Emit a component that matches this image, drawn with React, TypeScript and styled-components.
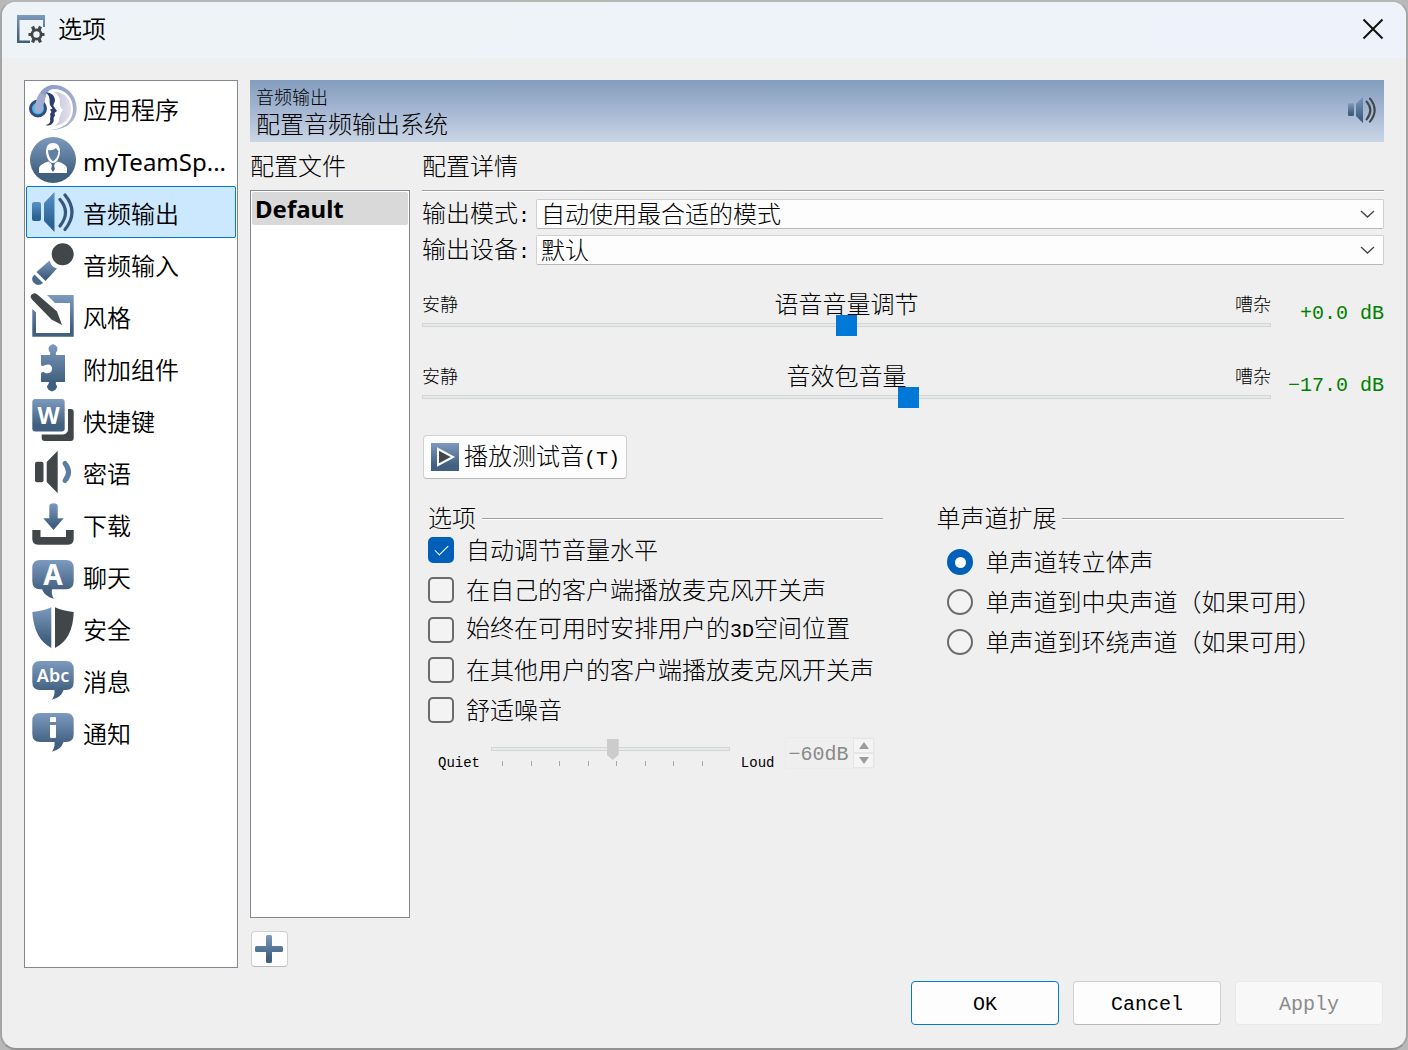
import React, { useState } from "react";
import styled, { createGlobalStyle, css } from "styled-components";

const ui = `"Noto Sans", "Noto Sans CJK SC", sans-serif`;
const song = `"Noto Sans CJK SC", sans-serif`;
const mono = `"Liberation Mono", "Noto Sans CJK SC", monospace`;
const dark = "#414749";
const blue = "url(#blue)";

const GlobalStyle = createGlobalStyle`
  *, *::before, *::after { box-sizing: border-box; }
  body { margin: 0; background: #b9b9b9; }
  button, input, select { font: inherit; color: inherit; margin: 0; }
  ul { list-style: none; margin: 0; padding: 0; }
`;

const Window = styled.div`
  min-height: 100vh;
  display: flex;
  flex-direction: column;
  border: 2px solid #a5a5a5;
  border-top-color: #b6b6b6;
  border-bottom-color: #929292;
  border-radius: 16px;
  background: #efefef;
  overflow: hidden;
  color: #000;
  font-family: ${song};
  font-size: 24px;
  font-weight: 300;
  line-height: 24px;
`;

const TitleBar = styled.header`
  display: flex;
  align-items: center;
  gap: 13px;
  height: 56px;
  padding: 0 22px 2px 15px;
  background: linear-gradient(90deg, #eef3f7, #eef3fb);
`;

const Title = styled.h1`
  flex: 1;
  margin: 0;
  font: 350 24px/24px ${ui};
`;

const CloseButton = styled.button`
  display: flex;
  padding: 0;
  border: 0;
  background: none;
`;

const Body = styled.main`
  flex: 1;
  display: grid;
  grid-template-columns: 214px minmax(0, 1fr);
  gap: 12px;
  padding: 22px 22px 13px;
`;

const Nav = styled.nav`
  padding: 1px;
  border: 1px solid #828790;
  background: #fff;
`;

const NavButton = styled.button<{ $active: boolean }>`
  display: flex;
  align-items: center;
  gap: 6px;
  width: 100%;
  height: 52px;
  padding: 0 2px;
  border: 1px solid ${(p) => (p.$active ? "#0078d4" : "transparent")};
  border-radius: 2px;
  background: ${(p) => (p.$active ? "#cce8ff" : "transparent")};
  font: 400 24px/32px ${ui};
  text-align: left;
  white-space: nowrap;
`;

const NavLabel = styled.span`
  padding-top: 3px;
  &:lang(zh) { font-weight: 350; }
`;

const Content = styled.section`
  display: flex;
  flex-direction: column;
  min-width: 0;
`;

const Banner = styled.div`
  display: flex;
  align-items: center;
  justify-content: space-between;
  height: 62px;
  padding: 0 6px 2px;
  background: linear-gradient(#839dbe, #a9bad5 55%, #cad6e5);
`;

const BannerText = styled.div`
  display: flex;
  flex-direction: column;
  gap: 5px;
`;

const Small = styled.span`
  font-size: 18px;
  line-height: 20px;
`;

const Columns = styled.div`
  flex: 1;
  display: grid;
  grid-template-columns: 160px minmax(0, 1fr);
  gap: 12px;
`;

const Column = styled.div`
  display: flex;
  flex-direction: column;
  min-width: 0;
`;

const Heading = styled.h2`
  margin: 0;
  height: 48px;
  font-size: 24px;
  font-weight: 300;
  line-height: 46px;
`;

const ProfileList = styled.ul`
  && { padding: 1px; }
  flex: 1;
  border: 1px solid #828790;
  background: #fff;
`;

const ProfileButton = styled.button`
  display: block;
  width: 100%;
  padding: 0 3px;
  border: 0;
  border-radius: 2px;
  background: #d9d9d9;
  font: 700 24px/33px ${ui};
  text-align: left;
`;

const raised = css`
  border: 1px solid #d0d0d0;
  border-bottom-color: #b9b9b9;
  border-radius: 4px;
  background: #fdfdfd;
`;

const AddButton = styled.button`
  ${raised}
  display: flex;
  align-items: center;
  width: 37px;
  height: 36px;
  margin: 13px 0 1px 1px;
  padding: 0 3px;
`;

const Rule = styled.hr`
  width: 100%;
  height: 2px;
  margin: 0;
  border: 0;
  border-top: 1px solid #a0a0a0;
  background: #fff;
`;

const Fields = styled.div`
  display: grid;
  grid-template-columns: 108px minmax(0, 1fr);
  align-items: center;
  gap: 6px;
  padding: 7px 0 26px;
`;

const Latin = styled.span`
  font-family: ${mono};
  font-size: 20px;
`;

const SelectBox = styled.div`
  position: relative;
  svg {
    position: absolute;
    right: 9px;
    top: 10px;
    pointer-events: none;
  }
`;

const Select = styled.select`
  ${raised}
  appearance: none;
  display: block;
  width: 100%;
  height: 30px;
  padding: 0 32px 2px 4px;
  border-radius: 2px;
`;

const Volume = styled.div`
  display: grid;
  grid-template-columns: minmax(0, 1fr) 96px;
  align-items: center;
  gap: 17px;
  margin-bottom: 28px;
`;

const VolumeHead = styled.div`
  display: grid;
  grid-template-columns: 1fr auto 1fr;
  align-items: center;
  height: 24px;
  padding-bottom: 2px;
  & > :last-child { text-align: right; }
`;

const Range = styled.input<{ $muted?: boolean }>`
  appearance: none;
  display: block;
  width: 100%;
  height: ${(p) => (p.$muted ? 24 : 20)}px;
  background: none;
  &::-webkit-slider-runnable-track {
    height: 4px;
    border: 1px solid #d4d6d5;
    background: #e7eaea;
  }
  &::-webkit-slider-thumb {
    appearance: none;
    width: ${(p) => (p.$muted ? 12 : 21)}px;
    height: 21px;
    margin-top: -9px;
    border-radius: 0;
    background: ${(p) => (p.$muted ? "#cccccc" : "#0078d7")};
    ${(p) => p.$muted && "clip-path: polygon(0 0, 100% 0, 100% 75%, 50% 100%, 0 75%);"}
  }
`;

const Decibel = styled.output`
  padding-top: 2px;
  color: #008000;
  font: 400 20px/24px ${mono};
  text-align: right;
  white-space: pre;
`;

const TestButton = styled.button`
  ${raised}
  display: flex;
  align-items: center;
  align-self: flex-start;
  gap: 5px;
  height: 44px;
  margin: 0 0 26px 1px;
  padding: 0 6px 0 7px;
`;

const Groups = styled.div`
  display: grid;
  grid-template-columns: minmax(0, 19fr) minmax(0, 17fr);
  align-items: start;
  gap: 53px;
  padding: 0 40px 0 6px;
`;

const Group = styled.fieldset`
  min-width: 0;
  margin: 0;
  padding: 0;
  border: 0;
`;

const Legend = styled.legend`
  display: flex;
  align-items: center;
  gap: 6px;
  width: 100%;
  padding: 0 0 1px;
  white-space: nowrap;
  ${Rule} { margin-top: 4px; }
`;

const Options = styled.div<{ $inset?: boolean }>`
  padding: ${(p) => (p.$inset ? "12px 0 0 11px" : "0")};
`;

const Option = styled.label`
  display: flex;
  align-items: center;
  gap: 12px;
  height: 40px;
  white-space: nowrap;
  & > span { padding-bottom: 2px; }
`;

const Tick = styled.input`
  appearance: none;
  flex: none;
  display: grid;
  place-items: center;
  width: 26px;
  height: 26px;
  border: 2px solid #6b6b6b;
  border-radius: 5px;
  background: #f3f3f3;
  &:checked {
    border-color: #005fb8;
    background: #005fb8;
  }
  &:checked::before {
    content: "";
    width: 13px;
    height: 7px;
    border: solid #fff;
    border-width: 0 0 1px 1px;
    transform: translateY(-2px) rotate(-45deg);
  }
`;

const Radio = styled(Tick)`
  border-radius: 50%;
  &:checked::before {
    width: 11px;
    height: 11px;
    border: 0;
    border-radius: 50%;
    background: #fff;
    transform: none;
  }
`;

const Comfort = styled.div`
  display: flex;
  align-items: flex-end;
  gap: 11px;
  height: 32px;
  margin-top: 7px;
  padding: 0 8px 0 10px;
`;

const Tiny = styled.span`
  font: 400 14px/12px ${mono};
`;

const ComfortTrack = styled.div`
  flex: 1;
  min-width: 0;
  align-self: flex-start;
`;

const Marks = styled.div`
  display: flex;
  justify-content: space-between;
  padding: 0 27px 0 11px;
`;

const Mark = styled.i`
  width: 1px;
  height: 5px;
  background: #a9a9a0;
`;

const Spin = styled.div`
  display: flex;
  align-items: center;
  width: 90px;
  height: 32px;
  padding: 0 0 0 2px;
  border: 1px solid #ebebeb;
  border-radius: 2px;
  color: #8a8a8a;
`;

const SpinInput = styled.input`
  flex: 1;
  min-width: 0;
  padding: 4px 0 0;
  border: 0;
  background: none;
  font: 400 20px/24px ${mono};
`;

const SpinArrows = styled.div`
  display: flex;
  flex-direction: column;
  width: 21px;
`;

const SpinButton = styled.button`
  display: flex;
  align-items: center;
  justify-content: center;
  height: 15px;
  padding: 0;
  border: 1px solid #e6e6e6;
  background: #f4f4f4;
`;

const Footer = styled.footer`
  display: flex;
  justify-content: flex-end;
  gap: 14px;
  padding: 0 23px 23px;
`;

const DialogButton = styled.button<{ $primary?: boolean }>`
  ${raised}
  width: 148px;
  height: 44px;
  padding: 4px 0 0;
  font: 400 20px/24px ${mono};
  ${(p) => p.$primary && "border-color: #0078d4;"}
  &:disabled {
    border-color: #e9e9e9;
    background: #f8f8f8;
    color: #8b8b8b;
  }
`;

const Hidden = styled.svg`
  position: absolute;
  width: 0;
  height: 0;
`;

const Gradients = () => (
  <Hidden aria-hidden="true">
    <defs>
      <linearGradient id="blue" x1="0" y1="0" x2="0" y2="1">
        <stop offset="0" stopColor="#7d9abf" />
        <stop offset="0.8" stopColor="#41607f" />
      </linearGradient>
      <linearGradient id="sound" x1="0" y1="0" x2="0" y2="1">
        <stop offset="0" stopColor="#5993c6" />
        <stop offset="0.8" stopColor="#2a6292" />
      </linearGradient>
      <linearGradient id="face" x1="0" y1="0" x2="1" y2="0">
        <stop offset="0" stopColor="#c3c3da" />
        <stop offset="1" stopColor="#e3e2ee" />
      </linearGradient>
      <linearGradient id="band" x1="0" y1="0" x2="1" y2="1">
        <stop offset="0" stopColor="#8797c3" />
        <stop offset="1" stopColor="#b0bad6" />
      </linearGradient>
    </defs>
  </Hidden>
);

const Glyph = ({ size = 48, box = "0 0 48 48", children }: { size?: number; box?: string; children: React.ReactNode }) => (
  <svg width={size} height={size} viewBox={box} aria-hidden="true">
    {children}
  </svg>
);

const Word = ({ x, y, size, weight = 700, children }: { x: number; y: number; size: number; weight?: number; children: string }) => (
  <text x={x} y={y} fontSize={size} fontFamily="Noto Sans" fontWeight={weight} fill="#fff" textAnchor="middle">
    {children}
  </text>
);

const Speaker = ({ fill = blue, wave = dark }: { fill?: string; wave?: string }) => (
  <>
    <rect x="3" y="14" width="9" height="19" rx="2" fill={fill} />
    <path d="M15 15 25.500 4V44L15 33Z" fill={fill} />
    <path d="M31 11.500Q42 24 31 38M36 7Q50 24 36 41.500" fill="none" stroke={wave} strokeWidth="3.200" strokeLinecap="round" />
  </>
);

const bubble = "M11 5H37Q44.700 5 44.700 13V26Q44.700 34 37 34H34.500Q32 42 22.700 43.700 26 40 25.500 34H11Q3.300 34 3.300 26V13Q3.300 5 11 5Z";

const icons: Record<string, React.ReactNode> = {
  app: (
    <>
      <path d="M24 8C34 7 42 14 42 25 42 34 35 41 25 42 29 40 31 37 30 34 32 32 31 29 34 26 31 23 30 20 31 16 30 12 28 9 24 8Z" fill="url(#face)" />
      <path d="M6 23C8 9 15 1 25 1 38 1 47.700 12 47.700 24.500 47.700 37 37 46.500 21 46 35 45 44 37 44 25 44 13 36 5 25 5 19 5 16 10 15 22Z" fill="url(#band)" />
      <path d="M17 8.500C22 8 26 12 26 16 26 19 24 20 24.500 22L28 27 25.500 29 26 31.500 24.500 34C26 39 21 43 16.500 41 20 40.500 22 38 21 35L21.500 32 21 30 22.500 28 21 25.500 23.500 24.500 21 21C20 17 22 13 17 8.500Z" fill="#2b3d70" />
      <circle cx="9" cy="24.500" r="7.500" fill="#42bce2" stroke="#344a80" strokeWidth="3" />
      <path d="M5.500 24Q7 14 11 9L17 12Q15 17 14 24 13 29 9 29 5 28.500 5.500 24Z" fill="#a3acd0" />
    </>
  ),
  user: (
    <>
      <circle cx="24" cy="24" r="23" fill={blue} />
      <path d="M24 7C28.500 7 31 10 31 16 30.500 22 28 27 24 27S17.500 22 17 16C17 10 19.500 7 24 7Z" fill="#fff" />
      <path d="M19 14Q24 15 27 12 28 14 29.500 15 29 22 24 25.500 19 21 19 14Z" fill="#617fa2" />
      <path d="M10 37V32Q11 28 19.500 25.500L24 29 28.500 25.500Q37 28 38 32V37Z" fill="#fff" />
      <path d="M22 27.500H26L25 29.500 26 33 24 36 22 33 23 29.500Z" fill="#4c6b8d" />
    </>
  ),
  output: <Speaker fill="url(#sound)" wave="#33587b" />,
  input: (
    <>
      <circle cx="33.700" cy="14.300" r="11" fill={dark} />
      <path d="M20.500 20.500Q22 27 28 28.500L16.500 41 7.500 32Z" fill={blue} />
      <path d="M5.500 34.500 14 43Q9 47 5 43 1 39 5.500 34.500Z" fill="#4b698b" />
    </>
  ),
  style: (
    <>
      <path d="M3.300 3H44.700V44.700H3.300ZM7 11V41H41V11Z" fill={blue} fillRule="evenodd" />
      <path d="M0 0H15L33 18 36 36 18 30 3.300 17H0Z" fill="#fff" />
      <path d="M3 7.500Q0 4 3.500 2 6 0 9 3L28 19.500 33 33 22.500 27.500Z" fill={dark} />
    </>
  ),
  addon: (
    <path d="M12 11H21Q22 9 20 7 18 2 24 0 30 2 28 7 26 9 27 11H36V38H27Q26 40 28 42 28 46 23 47.500 18 46 18 42 20 40 20 38H12V29Q14 27 16 29 23 30 23 25 23 19 16 21 14 23 12 21Z" fill={blue} />
  ),
  keys: (
    <>
      <rect x="12.700" y="13" width="32" height="32" rx="3" fill={dark} />
      <rect x="0" y="0" width="39" height="38.500" rx="5" fill="#fff" />
      <rect x="3.300" y="3" width="32.400" height="32.500" rx="3" fill={blue} />
      <Word x={19.5} y={28} size={23}>W</Word>
    </>
  ),
  whisper: (
    <>
      <rect x="6" y="13.700" width="8.500" height="20.600" rx="2" fill={dark} />
      <path d="M17.700 14 28.700 2.700V45.300L17.700 34Z" fill={dark} />
      <path d="M36 15.500Q43 24 36 32.500" fill="none" stroke="#5d7da3" strokeWidth="5" strokeLinecap="round" />
    </>
  ),
  download: (
    <>
      <path d="M20.300 18.300V6Q20.300 3.300 24.500 3.300T28.700 6V18.300H34.700L24.500 30 14.300 18.300Z" fill={blue} />
      <path d="M3.300 30H11.500V37H37V30H44.700V39Q44.700 44.700 39 44.700H9Q3.300 44.700 3.300 39Z" fill={dark} />
    </>
  ),
  chat: (
    <>
      <path d="M11 8H37Q44.700 8 44.700 16V29Q44.700 37.300 37 37.300H23Q22 43 25 46.700 16 45 13 37.300H11Q3.300 37.300 3.300 29V16Q3.300 8 11 8Z" fill={blue} />
      <Word x={24} y={33} size={28}>A</Word>
    </>
  ),
  shield: (
    <>
      <path d="M3.300 8Q14 7 22.300 3.300V44Q5 35 3.300 8Z" fill={blue} />
      <path d="M26 3.300Q34 7 44.700 8 44 35 26 44Z" fill={dark} />
    </>
  ),
  message: (
    <>
      <path d={bubble} fill={blue} />
      <Word x={24} y={26} size={18} weight={600}>Abc</Word>
    </>
  ),
  notice: (
    <>
      <path d={bubble} fill={blue} />
      <path d="M22 9H26Q27 9 27 10V14H21V10Q21 9 22 9ZM21 17H27V29Q27 30 26 30H22Q21 30 21 29Z" fill="#fff" />
    </>
  ),
};

const sections: [string, string][] = [
  ["app", "应用程序"],
  ["user", "myTeamSp..."],
  ["output", "音频输出"],
  ["input", "音频输入"],
  ["style", "风格"],
  ["addon", "附加组件"],
  ["keys", "快捷键"],
  ["whisper", "密语"],
  ["download", "下载"],
  ["chat", "聊天"],
  ["shield", "安全"],
  ["message", "消息"],
  ["notice", "通知"],
];

const checks: React.ReactNode[] = [
  "自动调节音量水平",
  "在自己的客户端播放麦克风开关声",
  <>始终在可用时安排用户的<Latin>3D</Latin>空间位置</>,
  "在其他用户的客户端播放麦克风开关声",
  "舒适噪音",
];

const modes = ["单声道转立体声", "单声道到中央声道（如果可用）", "单声道到环绕声道（如果可用）"];

const Chevron = () => (
  <svg width="15" height="10" viewBox="0 0 15 10" aria-hidden="true">
    <path d="M1 2 7.500 8 14 2" fill="none" stroke="#444" strokeWidth="1.300" />
  </svg>
);

const Field = ({ id, label, value }: { id: string; label: string; value: string }) => (
  <>
    <label htmlFor={id}>{label}<Latin>:</Latin></label>
    <SelectBox>
      <Select id={id}><option>{value}</option></Select>
      <Chevron />
    </SelectBox>
  </>
);

const VolumeSlider = ({ id, label, min, max, initial }: { id: string; label: string; min: number; max: number; initial: number }) => {
  const [value, setValue] = useState(initial);
  return (
    <Volume>
      <div>
        <VolumeHead>
          <Small>安静</Small>
          <label htmlFor={id}>{label}</label>
          <Small>嘈杂</Small>
        </VolumeHead>
        <Range id={id} type="range" min={min} max={max} step={0.5} value={value} onChange={(e) => setValue(Number(e.target.value))} />
      </div>
      <Decibel htmlFor={id}>{`${value < 0 ? "−" : "+"}${Math.abs(value).toFixed(1)} dB`}</Decibel>
    </Volume>
  );
};

export default function App() {
  const [active, setActive] = useState("output");
  return (
    <Window>
      <GlobalStyle />
      <Gradients />
      <TitleBar>
        <Glyph size={28} box="0 0 28 28">
          <path d="M0 0H28V12H26V5H2.500V25.500H13V28H0Z" fill={blue} />
          <circle cx="19.500" cy="19.500" r="4.600" fill="none" stroke={dark} strokeWidth="2.800" />
          <path d="M17 15 15.500 11.500M22 15 23.500 11.500M17 24 15.500 27.500M22 24 23.500 27.500M15 19.500H11.500M24 19.500H27.500" stroke={dark} strokeWidth="3.200" />
        </Glyph>
        <Title>选项</Title>
        <CloseButton aria-label="关闭">
          <svg width="22" height="22" viewBox="0 0 22 22" aria-hidden="true">
            <path d="M1.500 1.500 20.500 20.500M20.500 1.500 1.500 20.500" stroke="#111" strokeWidth="2" />
          </svg>
        </CloseButton>
      </TitleBar>
      <Body>
        <Nav>
          <ul>
            {sections.map(([key, label]) => (
              <li key={key}>
                <NavButton $active={active === key} onClick={() => setActive(key)}>
                  <Glyph>{icons[key]}</Glyph>
                  <NavLabel lang={key === "user" ? "en" : "zh"}>{label}</NavLabel>
                </NavButton>
              </li>
            ))}
          </ul>
        </Nav>
        <Content>
          <Banner>
            <BannerText>
              <Small>音频输出</Small>
              <span>配置音频输出系统</span>
            </BannerText>
            <Glyph size={32}><Speaker /></Glyph>
          </Banner>
          <Columns>
            <Column>
              <Heading>配置文件</Heading>
              <ProfileList>
                <li><ProfileButton>Default</ProfileButton></li>
              </ProfileList>
              <AddButton aria-label="添加">
                <svg width="28" height="28" viewBox="0 0 28 28" aria-hidden="true">
                  <path d="M11 1.500Q11 0 12.500 0H15.500Q17 0 17 1.500V11H26.500Q28 11 28 12.500V15.500Q28 17 26.500 17H17V26.500Q17 28 15.500 28H12.500Q11 28 11 26.500V17H1.500Q0 17 0 15.500V12.500Q0 11 1.500 11H11Z" fill={blue} />
                </svg>
              </AddButton>
            </Column>
            <Column>
              <Heading>配置详情</Heading>
              <Rule />
              <Fields>
                <Field id="mode" label="输出模式" value="自动使用最合适的模式" />
                <Field id="device" label="输出设备" value="默认" />
              </Fields>
              <VolumeSlider id="voice" label="语音音量调节" min={-20} max={20} initial={0} />
              <VolumeSlider id="pack" label="音效包音量" min={-40} max={0} initial={-17} />
              <TestButton>
                <svg width="28" height="28" viewBox="0 0 28 28" aria-hidden="true">
                  <rect width="28" height="28" fill={blue} />
                  <path d="M7 6 22 14 7 22Z" fill={dark} stroke="#fff" strokeWidth="2" />
                </svg>
                <span>播放测试音<Latin>(T)</Latin></span>
              </TestButton>
              <Groups>
                <Group>
                  <Legend>选项<Rule as="span" /></Legend>
                  <Options>
                    {checks.map((text, i) => (
                      <Option key={i}>
                        <Tick type="checkbox" defaultChecked={i === 0} />
                        <span>{text}</span>
                      </Option>
                    ))}
                  </Options>
                  <Comfort>
                    <Tiny>Quiet</Tiny>
                    <ComfortTrack>
                      <Range $muted type="range" aria-label="舒适噪音" min={0} max={100} defaultValue={51} disabled />
                      <Marks>{Array.from({ length: 8 }, (_, i) => <Mark key={i} />)}</Marks>
                    </ComfortTrack>
                    <Tiny>Loud</Tiny>
                    <Spin>
                      <SpinInput aria-label="舒适噪音" defaultValue="−60dB" disabled />
                      <SpinArrows>
                        <SpinButton disabled aria-label="增加">
                          <svg width="12" height="7" viewBox="0 0 12 7"><path d="M1 7 6 0 11 7Z" fill="#9c9c9c" /></svg>
                        </SpinButton>
                        <SpinButton disabled aria-label="减少">
                          <svg width="12" height="7" viewBox="0 0 12 7"><path d="M1 0H11L6 7Z" fill="#9c9c9c" /></svg>
                        </SpinButton>
                      </SpinArrows>
                    </Spin>
                  </Comfort>
                </Group>
                <Group>
                  <Legend>单声道扩展<Rule as="span" /></Legend>
                  <Options $inset>
                    {modes.map((text, i) => (
                      <Option key={text}>
                        <Radio type="radio" name="mono" defaultChecked={i === 0} />
                        <span>{text}</span>
                      </Option>
                    ))}
                  </Options>
                </Group>
              </Groups>
            </Column>
          </Columns>
        </Content>
      </Body>
      <Footer>
        <DialogButton $primary>OK</DialogButton>
        <DialogButton>Cancel</DialogButton>
        <DialogButton disabled>Apply</DialogButton>
      </Footer>
    </Window>
  );
}
